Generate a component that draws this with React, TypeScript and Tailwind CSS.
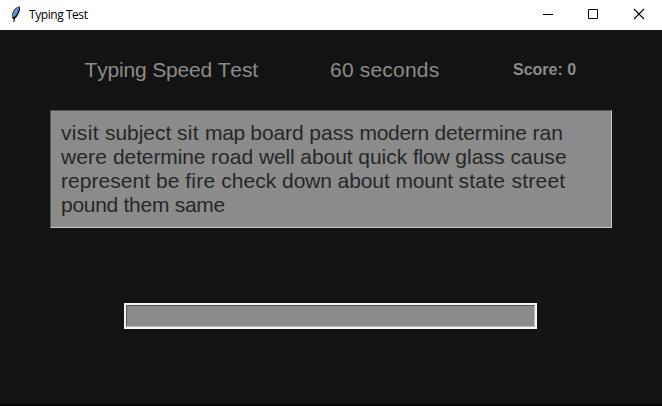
type Word = [text: string, tracking: string];

const passage: Word[][] = [
  [
    ['visit', 'tracking-[0.33px]'],
    ['subject', 'tracking-[-0.05px]'],
    ['sit', 'tracking-[0.3px]'],
    ['map', 'tracking-[-0.35px]'],
    ['board', 'tracking-[-0.1px]'],
    ['pass', 'tracking-[0.01px]'],
    ['modern', 'tracking-[-0.3px]'],
    ['determine', 'tracking-[-0.12px]'],
    ['ran', 'tracking-[0.01px]'],
  ],
  [
    ['were', 'tracking-[0.13px]'],
    ['determine', 'tracking-[-0.12px]'],
    ['road', 'tracking-[0.01px]'],
    ['well', 'tracking-[-0.13px]'],
    ['about', 'tracking-[-0.07px]'],
    ['quick', 'tracking-[-0.05px]'],
    ['flow', 'tracking-[-0.15px]'],
    ['glass', 'tracking-[0.05px]'],
    ['cause', 'tracking-[0.01px]'],
  ],
  [
    ['represent', 'tracking-[0.05px]'],
    ['be', 'tracking-[0.01px]'],
    ['fire', 'tracking-[0.2px]'],
    ['check', 'tracking-[0.01px]'],
    ['down', 'tracking-[-0.12px]'],
    ['about', 'tracking-[-0.07px]'],
    ['mount', 'tracking-[-0.2px]'],
    ['state', 'tracking-[0.25px]'],
    ['street', 'tracking-[0.25px]'],
  ],
  [
    ['pound', 'tracking-[-0.3px]'],
    ['them', 'tracking-[-0.25px]'],
    ['same', 'tracking-[-0.3px]'],
  ],
];

function FeatherIcon() {
  return (
    <svg width="16" height="16" viewBox="0 0 16 16" fill="none" className="-mt-0.5">
      <path d="M11.9 0.2L9 1.3C6 3.2 4.2 6 3.9 9V12.3L6 13.2C9 10.8 11.3 7 12 3.2Z" fill="#343438" />
      <path d="M10.6 1.4C7.8 3.2 5.8 6 5.2 10.2L6.4 10.8C8.8 8.5 10.4 5.5 11.1 2.2Z" fill="#5190df" />
      <path d="M9.6 2.2C7 4.6 5.5 7.5 4.8 10.6" stroke="#9cc2ea" strokeWidth="0.8" />
      <path d="M11.6 2.5C11 6.2 9 10 6.4 12.4L5.8 16" stroke="#08080a" strokeWidth="1.1" />
    </svg>
  );
}

function TitleBar() {
  return (
    <header className="flex h-[30px] items-center bg-white pl-2 text-black">
      <FeatherIcon />
      <h1 className="ml-[5px] font-['Open_Sans','Noto_Sans',sans-serif] text-[12px] leading-4 tracking-[-0.44px]">Typing Test</h1>
      <div className="ml-auto flex h-full">
        <svg width="45" height="30" viewBox="0 0 45 30">
          <path d="M9 14h10v1H9z" fill="#000" />
        </svg>
        <svg width="45" height="30" viewBox="0 0 45 30">
          <path d="M9.5 9.5h9v9h-9z" fill="none" stroke="#000" />
        </svg>
        <svg width="38" height="30" viewBox="0 0 38 30">
          <path d="M10 9l10 10M20 9L10 19" stroke="#000" strokeWidth="1.1" />
        </svg>
      </div>
    </header>
  );
}

export default function App() {
  return (
    <div className="flex h-[406px] w-[662px] flex-col overflow-hidden border-b-2 border-[#050505] bg-[#131313] font-['Liberation_Sans',Arial,sans-serif]">
      <TitleBar />
      <div className="mt-7 flex h-6 items-center whitespace-nowrap text-[21px] leading-6 text-[#8b8b8b] [font-kerning:none]">
        <div className="ml-[84.5px] w-[245.5px] tracking-[-0.17px]">Typing Speed Test</div>
        <div className="w-[183px] tracking-[0.2px]">60 seconds</div>
        <div className="text-base font-bold">Score: 0</div>
      </div>
      <div className="ml-[50px] mt-7 h-[118px] w-[562px] border border-b-[#c8c8c8] border-l-[#555] border-r-[#c8c8c8] border-t-[#555] bg-[#8b8b8b] pl-2.5 pt-2.5 text-[21px] leading-6 text-[#272727] [font-kerning:none]">
        {passage.map((line, row) => (
          <div key={row} className="whitespace-pre">
            {line.map(([text, tracking], i) => (
              <span key={i} className={tracking}>{text + (i < line.length - 1 ? ' ' : '')}</span>
            ))}
          </div>
        ))}
      </div>
      <input
        aria-label="Type here"
        className="ml-[126px] mt-[77px] h-[22px] w-[409px] border border-b-[#b9b9b9] border-l-[#555] border-r-[#b9b9b9] border-t-[#555] bg-[#8b8b8b] px-1 text-[#272727] shadow-[0_0_0_2px_#f1f5f3] outline-none"
      />
    </div>
  );
}
